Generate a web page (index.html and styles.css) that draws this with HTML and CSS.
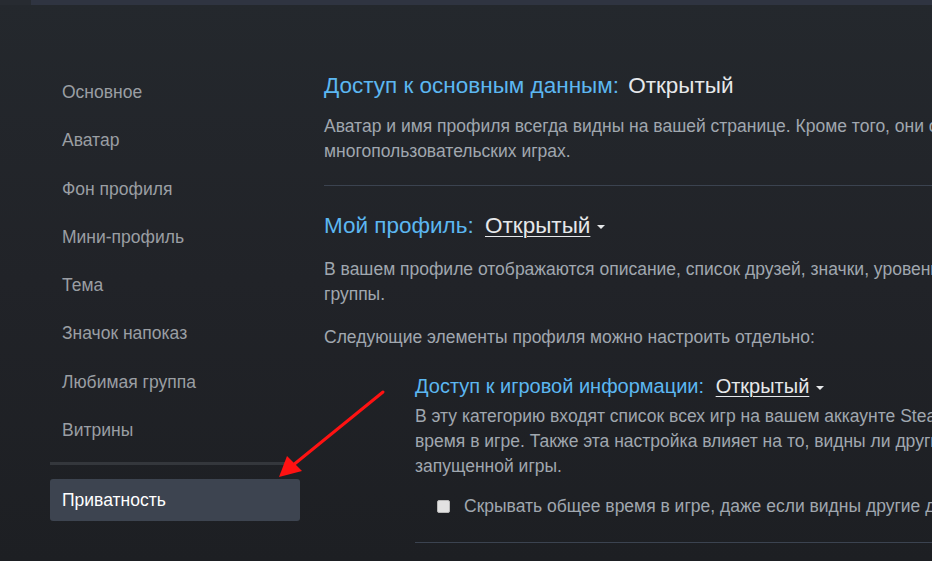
FILE: index.html
```html
<!DOCTYPE html>
<html lang="ru">
<head>
<meta charset="utf-8">
<link rel="stylesheet" href="styles.css">
</head>
<body>
<div class="topbar"><div class="topbar-left"></div><div class="topbar-main"></div></div>
<div class="page">
  <nav class="sidebar">
    <a class="nav-item">Основное</a>
    <a class="nav-item">Аватар</a>
    <a class="nav-item">Фон профиля</a>
    <a class="nav-item">Мини-профиль</a>
    <a class="nav-item">Тема</a>
    <a class="nav-item">Значок напоказ</a>
    <a class="nav-item">Любимая группа</a>
    <a class="nav-item">Витрины</a>
    <div class="nav-sep"></div>
    <a class="nav-item active">Приватность</a>
  </nav>
  <main class="content">
    <h2 class="heading first">Доступ к основным данным: <span class="state">Открытый</span></h2>
    <p class="desc">Аватар и имя профиля всегда видны на вашей странице. Кроме того, они отображаются в некоторых<br>многопользовательских играх.</p>
    <div class="divider"></div>
    <h2 class="heading second">Мой профиль: <span class="state link wide">Открытый</span><span class="caret"></span></h2>
    <p class="desc d2">В вашем профиле отображаются описание, список друзей, значки, уровень Steam, витрины, комментарии и<br>группы.</p>
    <p class="desc d3">Следующие элементы профиля можно настроить отдельно:</p>
    <section class="sub">
      <h3 class="subheading">Доступ к игровой информации: <span class="state link wider">Открытый</span><span class="caret"></span></h3>
      <p class="desc d4">В эту категорию входят список всех игр на вашем аккаунте Steam, список желаемого, достижения и<br>время в игре. Также эта настройка влияет на то, видны ли другим пользователям названия<br>запущенной игры.</p>
      <label class="check"><span class="box"></span>Скрывать общее время в игре, даже если видны другие данные об играх</label>
      <div class="divider sub-divider"></div>
    </section>
  </main>
</div>
<svg class="arrow" width="932" height="561" viewBox="0 0 932 561">
  <line x1="383" y1="392" x2="292" y2="466" stroke="#ff1212" stroke-width="3" stroke-linecap="round"/>
  <polygon points="279,477 287,456 302,471" fill="#ff1212"/>
</svg>
</body>
</html>
```
FILE: styles.css
```css
html, body {
  margin: 0;
  padding: 0;
}
body {
  width: 932px;
  height: 561px;
  overflow: hidden;
  background: linear-gradient(to bottom, #24282d 0%, #212328 50%, #1d1f23 100%);
  font-family: Arial, "Liberation Sans", sans-serif;
  position: relative;
}
.topbar {
  display: flex;
  height: 5px;
}
.topbar-left {
  width: 31px;
  background: #272b31;
}
.topbar-main {
  flex: 1;
  background: #2f3441;
}
.page {
  display: flex;
  padding-top: 63px;
  padding-left: 50px;
}
.sidebar {
  width: 250px;
  flex: none;
  display: flex;
  flex-direction: column;
}
.nav-item {
  display: block;
  height: 48.3px;
  line-height: 48px;
  padding-left: 12px;
  font-size: 17.5px;
  color: #9a9ea3;
}
.nav-sep {
  height: 3px;
  width: 240px;
  background: #34373c;
  margin-top: 8px;
  margin-bottom: 14px;
}
.nav-item.active {
  height: 42px;
  line-height: 42px;
  background: #3d4450;
  color: #ffffff;
  border-radius: 3px;
}
.content {
  margin-left: 24px;
  margin-top: 1px;
  width: 900px;
  flex: none;
}
.heading {
  margin: 0;
  font-weight: normal;
  font-size: 22.5px;
  line-height: 28px;
  color: #5cb7f1;
  white-space: nowrap;
}
.heading.first {
  margin-top: 3px;
}
.heading.second {
  margin-top: 26px;
}
.state {
  color: #e6e8ea;
  margin-left: 3px;
}
.state.wide {
  margin-left: 5px;
}
.state.wider {
  margin-left: 6px;
}
.link {
  text-decoration: underline;
  text-underline-offset: 3px;
  text-decoration-thickness: 1px;
}
.caret {
  display: inline-block;
  width: 0;
  height: 0;
  border-left: 4px solid transparent;
  border-right: 4px solid transparent;
  border-top: 4px solid #e6e8ea;
  margin-left: 7px;
  vertical-align: middle;
}
.desc {
  margin: 14px 0 0;
  font-size: 17.5px;
  line-height: 25px;
  color: #a0a7af;
  white-space: nowrap;
}
.desc.d2 {
  margin-top: 17px;
}
.desc.d3 {
  margin-top: 18px;
}
.divider {
  height: 1px;
  background: #3b4350;
  margin-top: 21px;
}
.sub {
  margin-left: 91px;
  margin-top: 24px;
}
.subheading {
  margin: 0;
  font-weight: normal;
  font-size: 20px;
  line-height: 24px;
  color: #5cb7f1;
  white-space: nowrap;
}
.desc.d4 {
  margin-top: 6px;
}
.check {
  display: flex;
  align-items: center;
  margin-top: 14px;
  margin-left: 22px;
  height: 27px;
  font-size: 17.5px;
  color: #a0a7af;
  white-space: nowrap;
}
.box {
  width: 11px;
  height: 11px;
  border: 1px solid #b8b8b8;
  border-radius: 2px;
  background: #e2e2e2;
  margin-right: 14px;
  flex: none;
}
.sub-divider {
  margin-top: 22px;
}
.arrow {
  position: absolute;
  left: 0;
  top: 0;
  pointer-events: none;
}
```
